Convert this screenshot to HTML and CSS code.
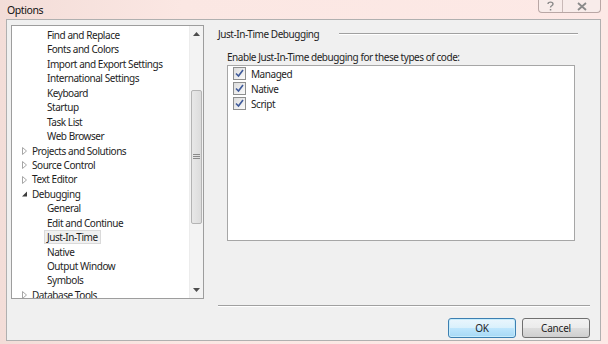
FILE: index.html
```html
<!DOCTYPE html>
<html>
	<head>
		<meta http-equiv="Content-Type" content="text/html; charset=utf-8" />
		<title>Options</title>
		<link rel="stylesheet" href="styles.css">
	</head>
	<body>
		<div class="window">
			<div class="titlebar">
				<span class="title">Options</span>
				<div class="caption-buttons">
					<span class="cap-btn help">
						<svg width="7" height="10" viewBox="0 0 7 10"><path d="M1 3 C1 0.5 6 0.5 6 3 C6 5 3.5 4.5 3.5 6.5" stroke="#8a8a8a" stroke-width="1.4" fill="none"/><rect x="2.8" y="8" width="1.5" height="1.5" fill="#8a8a8a"/></svg>
					</span>
					<span class="cap-btn close">
						<svg width="10" height="9" viewBox="0 0 10 9"><path d="M1 1 L9 8 M9 1 L1 8" stroke="#8a8a8a" stroke-width="1.8" fill="none"/></svg>
					</span>
				</div>
			</div>
			<div class="client">
				<div class="tree">
					<div class="tree-items">
						<div class="node child">Find and Replace</div>
						<div class="node child">Fonts and Colors</div>
						<div class="node child">Import and Export Settings</div>
						<div class="node child">International Settings</div>
						<div class="node child">Keyboard</div>
						<div class="node child">Startup</div>
						<div class="node child">Task List</div>
						<div class="node child">Web Browser</div>
						<div class="node top"><svg class="arrow" width="7" height="8" viewBox="0 0 7 8"><path d="M1.5 0.5 L5.5 4 L1.5 7.5 Z" fill="none" stroke="#a6a6a6"/></svg>Projects and Solutions</div>
						<div class="node top"><svg class="arrow" width="7" height="8" viewBox="0 0 7 8"><path d="M1.5 0.5 L5.5 4 L1.5 7.5 Z" fill="none" stroke="#a6a6a6"/></svg>Source Control</div>
						<div class="node top"><svg class="arrow" width="7" height="8" viewBox="0 0 7 8"><path d="M1.5 0.5 L5.5 4 L1.5 7.5 Z" fill="none" stroke="#a6a6a6"/></svg>Text Editor</div>
						<div class="node top"><svg class="arrow" width="7" height="8" viewBox="0 0 7 8"><path d="M6 1.5 L6 6.5 L1 6.5 Z" fill="#3c3c3c"/></svg>Debugging</div>
						<div class="node child">General</div>
						<div class="node child">Edit and Continue</div>
						<div class="node child"><span class="selected">Just-In-Time</span></div>
						<div class="node child">Native</div>
						<div class="node child">Output Window</div>
						<div class="node child">Symbols</div>
						<div class="node top"><svg class="arrow" width="7" height="8" viewBox="0 0 7 8"><path d="M1.5 0.5 L5.5 4 L1.5 7.5 Z" fill="none" stroke="#a6a6a6"/></svg>Database Tools</div>
					</div>
					<div class="scrollbar">
						<svg class="sb-arrow" width="7" height="4" viewBox="0 0 7 4"><path d="M0 4 L3.5 0 L7 4 Z" fill="#4d4d4d"/></svg>
						<div class="sb-track">
							<div class="sb-thumb">
								<svg width="7" height="6" viewBox="0 0 7 6"><path d="M0 0.5 H7 M0 2.5 H7 M0 4.5 H7" stroke="#8a8a8a"/></svg>
							</div>
						</div>
						<svg class="sb-arrow" width="7" height="4" viewBox="0 0 7 4"><path d="M0 0 L3.5 4 L7 0 Z" fill="#4d4d4d"/></svg>
					</div>
				</div>
				<div class="panel">
					<div class="group-head">
						<span>Just-In-Time Debugging</span>
						<div class="rule"></div>
					</div>
					<div class="label">Enable Just-In-Time debugging for these types of code:</div>
					<div class="checklist">
						<div class="check-row"><span class="checkbox"><svg width="9" height="9" viewBox="0 0 9 9"><path d="M1 4.5 L3.5 7 L8 1" stroke="#3e5a9a" stroke-width="1.6" fill="none"/></svg></span>Managed</div>
						<div class="check-row"><span class="checkbox"><svg width="9" height="9" viewBox="0 0 9 9"><path d="M1 4.5 L3.5 7 L8 1" stroke="#3e5a9a" stroke-width="1.6" fill="none"/></svg></span>Native</div>
						<div class="check-row"><span class="checkbox"><svg width="9" height="9" viewBox="0 0 9 9"><path d="M1 4.5 L3.5 7 L8 1" stroke="#3e5a9a" stroke-width="1.6" fill="none"/></svg></span>Script</div>
					</div>
					<div class="spacer"></div>
					<div class="separator"></div>
					<div class="buttons">
						<button class="btn default">OK</button>
						<button class="btn">Cancel</button>
					</div>
				</div>
			</div>
		</div>
	</body>
</html>
```

FILE: styles.css
```css
body {margin:0;background:#fff;font-family:"Noto Sans", "Open Sans", sans-serif;font-size:10px;letter-spacing:-0.45px;color:#1e1e1e}
.window {width:608px;height:344px;background:linear-gradient(90deg,#f3ddd8 0,#fbe7e3 30%,#fde9e6 100%);display:flex;flex-direction:column;box-sizing:border-box}
.titlebar {height:19px;display:flex;align-items:flex-start;position:relative}
.title {font-size:10.5px;letter-spacing:-0.4px;color:#111;padding:2px 0 0 7px;line-height:16px}
.caption-buttons {position:absolute;right:7px;top:0;display:flex;border:1px solid #b9a7a5;border-top:none;border-radius:0 0 4px 4px;background:#f8ecea;height:12px}
.cap-btn {display:flex;align-items:center;justify-content:center;height:12px}
.help {width:23px;border-right:1px solid #c9b9b7}
.close {width:37px}
.client {flex:1;margin:0 7px 3px 6px;background:#f0f0f0;border:1px solid #b0b0b0;display:flex;padding:5px 10px 0 4px}
.tree {width:191px;height:272px;background:#fff;border:1px solid #9d9d9d;display:flex;overflow:hidden}
.tree-items {flex:1;padding-top:2px;overflow:hidden}
.node {height:14.45px;line-height:14.45px;white-space:nowrap;display:flex;align-items:center}
.child {padding-left:35px}
.top {padding-left:9px}
.arrow {margin-right:4px}
.selected {background:#f0f0f0;border:1px solid #dadada;margin-left:-3px;padding:0 2px;line-height:12px}
.scrollbar {width:13px;background:#f3f3f3;border-left:1px solid #ececec;display:flex;flex-direction:column;align-items:center}
.sb-arrow {margin:6px 0}
.sb-track {flex:1;width:100%;padding-top:48px}
.sb-thumb {height:132px;margin:0 1px;background:linear-gradient(90deg,#e8e8e8,#dcdcdc);border:1px solid #b4b4b4;border-radius:2px;display:flex;align-items:center;justify-content:center}
.panel {flex:1;margin-left:14px;display:flex;flex-direction:column}
.group-head {display:flex;align-items:center;height:16px;margin-top:1px;margin-right:12px;color:#1e1e1e}
.rule {flex:1;height:1px;background:#a0a0a0;margin-left:20px;border-bottom:1px solid #fff}
.label {margin:8px 0 0 9px;line-height:14px}
.checklist {margin:1px 15px 0 9px;height:174px;background:#fff;border:1px solid #a6a6a6}
.check-row {display:flex;align-items:center;height:15px;padding-left:5px}
.checkbox {width:11px;height:11px;border:1px solid #8e8f8f;background:linear-gradient(135deg,#dcdcdc,#fbfbfb);margin-right:5px;display:flex;align-items:center;justify-content:center}
.spacer {flex:1}
.separator {height:1px;background:#a0a0a0;border-bottom:1px solid #fff}
.buttons {display:flex;justify-content:flex-end;gap:6px;height:33px;padding-top:11px;box-sizing:border-box}
.btn {width:68px;height:20px;font-family:inherit;font-size:10px;letter-spacing:-0.2px;color:#1e1e1e;border:1px solid #707070;border-radius:3px;background:linear-gradient(#f2f2f2 0,#ebebeb 50%,#dddddd 51%,#cfcfcf 100%);padding:0}
.default {border-color:#3c7fb1;background:linear-gradient(#eaf6fd 0,#d9f0fc 50%,#bee6fd 51%,#a7d9f5 100%);box-shadow:inset 0 0 0 1px #c6ecfc}
```
